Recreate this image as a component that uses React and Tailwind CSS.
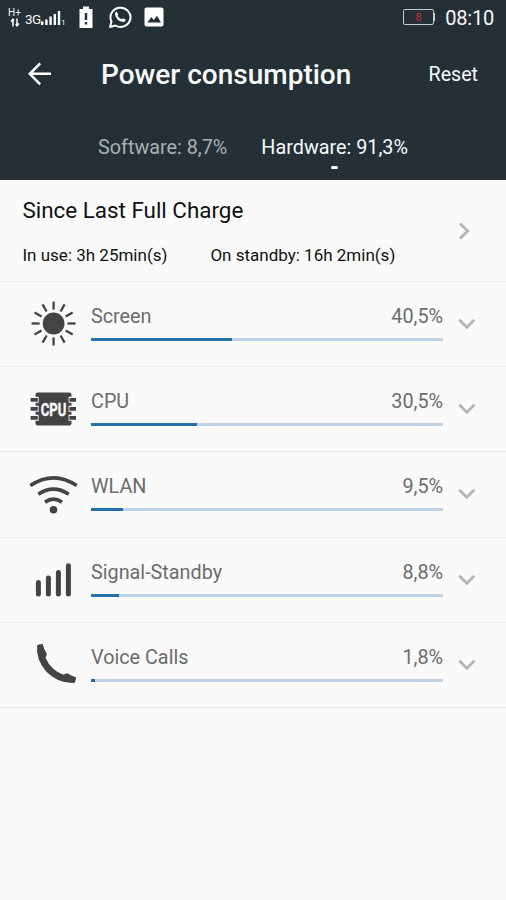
import React from "react";

const ScreenIcon = () => (
  <svg viewBox="0 0 56 56" className="w-14 h-14" fill="none" stroke="#444" strokeWidth="2.3">
    <circle cx="27.6" cy="27.5" r="10.9" fill="#444" stroke="none" />
    {[0, 30, 60, 90, 120, 150, 180, 210, 240, 270, 300, 330].map((deg) => (
      <path key={deg} d="M27.6 13.6V5.5" transform={`rotate(${deg} 27.6 27.5)`} />
    ))}
  </svg>
);

const CpuIcon = () => (
  <svg viewBox="0 0 56 56" className="w-14 h-14">
    <path d="M11 11.5H44L45.5 13V43L44 44.5H11L9.5 43V13Z" fill="#444" />
    {[18.8, 27.8, 36.8].map((y) => (
      <g key={y}>
        <path d={`M8 ${y}H12.6M42.6 ${y}H47`} stroke="#fafafa" strokeWidth="6" />
        <path d={`M4.6 ${y}H11.8M43.4 ${y}H50`} stroke="#444" strokeWidth="3.8" />
      </g>
    ))}
    <text
      x="14.8"
      y="34.6"
      textLength="25.6"
      lengthAdjust="spacingAndGlyphs"
      fill="#fafafa"
      stroke="#fafafa"
      strokeWidth="0.4"
      className="font-['Roboto',sans-serif] font-bold text-[19px]"
    >
      CPU
    </text>
  </svg>
);

const WlanIcon = () => (
  <svg viewBox="0 0 56 56" className="w-14 h-14" fill="none" stroke="#444" strokeWidth="3.6">
    <path d="M4.3 19.6Q27.5 4 50.7 19.6" />
    <path d="M12.3 28.3Q27.5 18 42.7 28.3" />
    <path d="M19 36.2Q27.5 30 36 36.2" />
    <circle cx="27.5" cy="43.8" r="3.8" fill="#444" stroke="none" />
  </svg>
);

const SignalIcon = () => (
  <svg viewBox="0 0 56 56" className="w-14 h-14" stroke="#444" strokeWidth="5" strokeLinecap="round">
    <path d="M12.4 30.5V42M22.4 26.1V42M32.4 20.6V42M42.4 13.8V42" />
  </svg>
);

const PhoneIcon = () => (
  <svg viewBox="0 0 56 56" className="w-14 h-14">
    <path
      d="M11.2 8.3Q13.5 7 16.6 7Q18 12.5 20.9 17Q20.4 19 19.4 20.5Q22 27 27.5 32Q32 36 37.5 37.8Q39.3 36.6 41.3 36.3Q45.5 39 50 40.3Q50 43.5 48.8 45.8Q32 47 20.2 34.6Q9.5 22 11.2 8.3Z"
      fill="#444"
    />
  </svg>
);

const items = [
  { name: "Screen", value: "40,5%", width: 40, Icon: ScreenIcon },
  { name: "CPU", value: "30,5%", width: 30, Icon: CpuIcon },
  { name: "WLAN", value: "9,5%", width: 9.2, Icon: WlanIcon },
  { name: "Signal-Standby", value: "8,8%", width: 8, Icon: SignalIcon },
  { name: "Voice Calls", value: "1,8%", width: 1.1, Icon: PhoneIcon },
];

const StatusBar = () => (
  <div className="flex items-center h-[35px] pl-[7px] pr-3">
    <div className="flex flex-col w-[15px] h-5 items-center">
      <span className="text-[10px] leading-[10px]">H+</span>
      <svg viewBox="0 0 10 9" className="w-2.5 h-[9px]" fill="none" stroke="#fff" strokeWidth="1.5">
        <path d="M3 8.5V1.5M1 3.5L3 1.2L4 2.5M7 0.5V7.5M5.8 6L7 7.8L9 5.5" />
      </svg>
    </div>
    <span className="ml-[3px] mt-[3px] w-[15px] text-[13.5px] leading-4 tracking-[-0.5px]">3G</span>
    <svg viewBox="0 0 26 18" className="w-[26px] h-[18px]" fill="#fff">
      <path d="M1 12.5h2.4V16H1zM5.2 10.5h2.4V16H5.2zM9.4 7.5h2.4V16H9.4zM13.6 5H16v11h-2.4zM17.8 2h2.4v14h-2.4z" />
      <text x="21.3" y="16.3" className="text-[7.5px]">1</text>
    </svg>
    <svg viewBox="0 0 16 24" className="w-4 h-6 ml-3 -mt-0.5" fill="#fff">
      <path d="M5 1.5h6V4h3.5v19h-13V4H5z" />
      <path d="M6.8 8h2.4v7H6.8zM6.8 17h2.4v2.4H6.8z" fill="#243036" />
    </svg>
    <svg viewBox="0 0 24 24" className="w-6 h-6 ml-[14px] -mt-px" fill="none" stroke="#fff" strokeWidth="2">
      <path d="M2 22L3.5 16.5A10 9.6 0 1 1 7.3 20.5Z" strokeLinejoin="round" />
      <path
        d="M8.6 6.4L10.3 9.4L9.5 10.8Q11 13.4 13.8 14.3L15 13.2L17.8 14.7Q17.5 17.1 15.2 17.1Q8.5 16.2 7 9.5Q7 7 8.6 6.4Z"
        fill="#fff"
        stroke="none"
      />
    </svg>
    <svg viewBox="0 0 20 20" className="w-5 h-5 ml-3 -mt-px" fill="#fff">
      <rect x="0.5" y="0.5" width="19" height="19" rx="2" />
      <path d="M3.5 15.5L7.2 10L9.7 13L13 8.8L17 15.5Z" fill="#243036" />
    </svg>
    <div className="flex items-center ml-auto -mt-px">
      <div className="flex items-center justify-center w-[31px] h-4 border border-[#c5cbce] rounded-[2px] text-[11px] leading-none text-[#d32a33]">
        8
      </div>
      <div className="w-px h-2 bg-[#c5cbce]" />
    </div>
    <span className="ml-[10px] text-xl leading-6 tracking-[-0.2px]">08:10</span>
  </div>
);

const App = () => {
  return (
    <div className="w-full h-[900px] overflow-hidden bg-[#fafafa] font-['Roboto',sans-serif]">
      <div className="h-[180px] bg-[#243036] text-[#f8fafa]">
        <StatusBar />
        <div className="flex items-center h-[78px] pl-7 pr-7">
          <svg viewBox="0 0 24 24" className="w-6 h-6 -mt-px" fill="none" stroke="#fff" strokeWidth="2.6">
            <path d="M23 11.8H2.5M12.2 1.3L1.8 11.8L12.2 22.3" />
          </svg>
          <h1 className="ml-[49px] mt-[2px] text-[28px] leading-8 font-medium">Power consumption</h1>
          <button className="ml-auto mt-[2px] text-[19.6px] leading-6">Reset</button>
        </div>
        <div className="flex gap-[34px] pl-[98px] pt-[23px] text-[19.8px] leading-6">
          <span className="text-[#a9b1b4]">Software: 8,7%</span>
          <div className="flex flex-col items-center">
            <span>Hardware: 91,3%</span>
            <div className="mt-[6px] w-[7px] h-[3px] rounded-sm bg-white" />
          </div>
        </div>
      </div>

      <div className="flex items-center justify-between h-[102px] pl-[22.5px] pr-9 border-b border-[#e9e9e9] text-[#111]">
        <div className="mt-px">
          <h2 className="text-[22.4px] leading-7">Since Last Full Charge</h2>
          <div className="flex gap-[43px] mt-[19px] text-[17px] leading-6">
            <span>In use: 3h 25min(s)</span>
            <span>On standby: 16h 2min(s)</span>
          </div>
        </div>
        <svg viewBox="0 0 12 18" className="w-3 h-[18px]" fill="none" stroke="#b5b5b5" strokeWidth="2.8">
          <path d="M2 1.5L9.7 9L2 16.5" />
        </svg>
      </div>

      {items.map(({ name, value, width, Icon }) => (
        <div key={name} className="flex h-[85.2px] pl-[26px] border-b border-[#e9e9e9]">
          <div className="mt-[14px]">
            <Icon />
          </div>
          <div className="ml-[9px] mt-[23px] w-[352px]">
            <div className="flex justify-between text-[19.8px] leading-6 text-[#6c6c6c]">
              <span>{name}</span>
              <span>{value}</span>
            </div>
            <div className="mt-[9px] h-[3px] bg-[#bfd3e6]">
              <div className="h-full bg-[#2470ab]" style={{ width: `${width}%` }} />
            </div>
          </div>
          <svg viewBox="0 0 18 12" className="w-[18px] h-3 ml-[15px] mt-[36px]" fill="none" stroke="#b5b5b5" strokeWidth="2.8">
            <path d="M1.3 1.7L8.8 9.2L16.3 1.7" />
          </svg>
        </div>
      ))}
    </div>
  );
};

export default App;
